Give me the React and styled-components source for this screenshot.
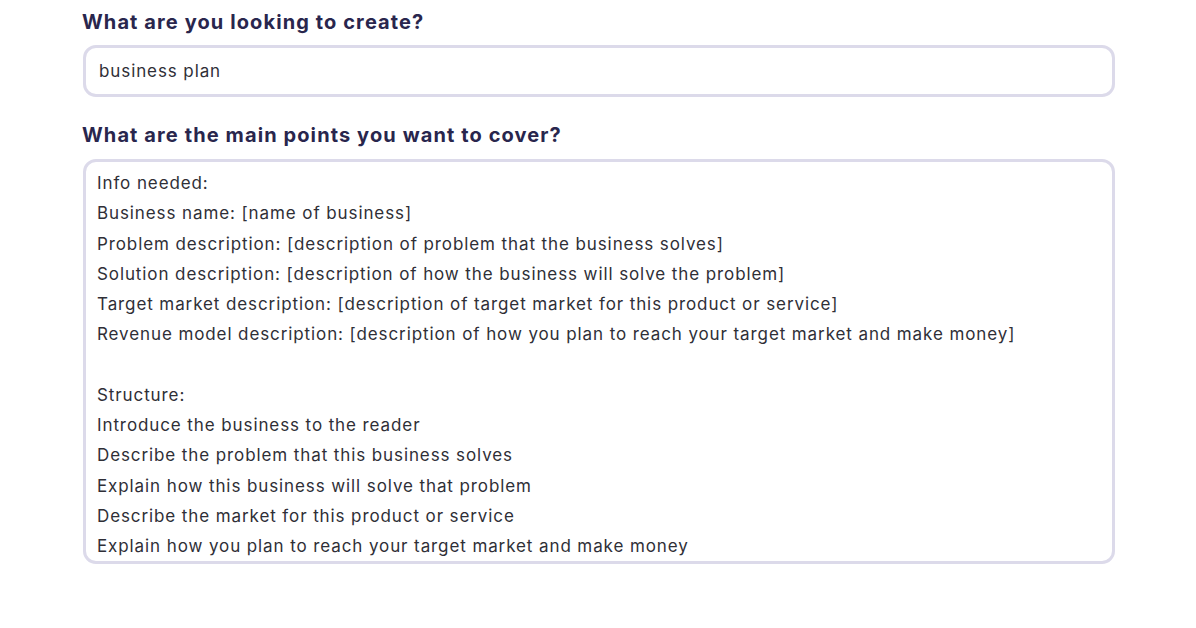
import React from "react";
import styled, { createGlobalStyle } from "styled-components";

const GlobalStyle = createGlobalStyle`
  html, body {
    margin: 0;
    padding: 0;
    background: #ffffff;
  }
  body {
    font-family: "Inter", "Noto Sans", sans-serif;
  }
`;

const Page = styled.div`
  width: 1196px;
  height: 628px;
  box-sizing: border-box;
  padding: 8px 81px 0 82px;
  display: flex;
  flex-direction: column;
`;

const Label = styled.h2`
  margin: 0 0 ${(p) => p.gap || 12}px 0;
  font-size: 20px;
  font-weight: 700;
  line-height: 28px;
  color: #29264d;
  letter-spacing: 1.1px;
`;

const Field = styled.div`
  box-sizing: border-box;
  border: 3px solid #dcdaea;
  border-radius: 13px;
  background: #fff;
  color: #2f2f37;
  font-size: 17px;
  letter-spacing: 0.9px;
  margin-left: 1px;
`;

const Input = styled(Field)`
  height: 52px;
  padding: 0 13px;
  display: flex;
  align-items: center;
  margin-bottom: 24px;
`;

const TextArea = styled(Field)`
  height: 405px;
  padding: 6px 11px;
`;

const Line = styled.div`
  line-height: 30.25px;
  height: 30.25px;
  white-space: nowrap;
`;

const lines = [
  "Info needed:",
  "Business name: [name of business]",
  "Problem description: [description of problem that the business solves]",
  "Solution description: [description of how the business will solve the problem]",
  "Target market description: [description of target market for this product or service]",
  "Revenue model description: [description of how you plan to reach your target market and make money]",
  "",
  "Structure:",
  "Introduce the business to the reader",
  "Describe the problem that this business solves",
  "Explain how this business will solve that problem",
  "Describe the market for this product or service",
  "Explain how you plan to reach your target market and make money",
];

export default function App() {
  return (
    <>
      <GlobalStyle />
      <Page>
        <Label gap={9}>What are you looking to create?</Label>
        <Input>business plan</Input>
        <Label gap={10}>What are the main points you want to cover?</Label>
        <TextArea>
          {lines.map((l, i) => (
            <Line key={i}>{l || "\u00a0"}</Line>
          ))}
        </TextArea>
      </Page>
    </>
  );
}
